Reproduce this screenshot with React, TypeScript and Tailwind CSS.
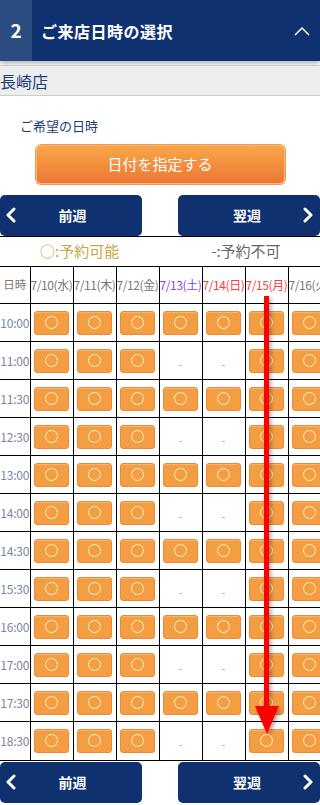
import React from "react";

const days = [
  { label: "7/10(水)", color: "text-[#777777]" },
  { label: "7/11(木)", color: "text-[#777777]" },
  { label: "7/12(金)", color: "text-[#777777]" },
  { label: "7/13(土)", color: "text-[#7b4cf2]" },
  { label: "7/14(日)", color: "text-[#ff3b3b]" },
  { label: "7/15(月)", color: "text-[#ff3b3b]" },
  { label: "7/16(火)", color: "text-[#777777]" },
];

const full = [true, true, true, true, true, true, true];
const partial = [true, true, true, false, false, true, true];

const rows: { time: string; slots: boolean[] }[] = [
  { time: "10:00", slots: full },
  { time: "11:00", slots: partial },
  { time: "11:30", slots: full },
  { time: "12:30", slots: partial },
  { time: "13:00", slots: full },
  { time: "14:00", slots: partial },
  { time: "14:30", slots: full },
  { time: "15:30", slots: partial },
  { time: "16:00", slots: full },
  { time: "17:00", slots: partial },
  { time: "17:30", slots: full },
  { time: "18:30", slots: partial },
];

function Chevron({ dir }: { dir: "left" | "right" }) {
  return (
    <svg width="12" height="16" viewBox="0 0 12 16" className="shrink-0">
      <polyline
        points={dir === "left" ? "9,2 3,8 9,14" : "3,2 9,8 3,14"}
        fill="none"
        stroke="white"
        strokeWidth="3"
        strokeLinecap="round"
        strokeLinejoin="round"
      />
    </svg>
  );
}

function WeekNav() {
  return (
    <div className="flex justify-between">
      <button className="flex h-[41px] w-[142px] items-center rounded-[5px] bg-[#0f3170] pl-[5px] text-[14px] font-bold text-white">
        <Chevron dir="left" />
        <span className="flex-1 pr-[14px] text-center">前週</span>
      </button>
      <button className="flex h-[41px] w-[142px] items-center rounded-[5px] bg-[#0f3170] pr-[6px] text-[14px] font-bold text-white">
        <span className="flex-1 pl-[14px] text-center">翌週</span>
        <Chevron dir="right" />
      </button>
    </div>
  );
}

function Slot() {
  return (
    <div className="mx-auto flex h-[24px] w-[35px] items-center justify-center rounded-[3px] border border-[#ef8a3c] bg-[#f49e43] shadow-[inset_0_1px_0_#f8b56f]">
      <span className="block h-[13px] w-[13px] rounded-full border-[1.5px] border-[#fff3c4]" />
    </div>
  );
}

export default function App() {
  return (
    <div
      className="relative w-[320px] overflow-hidden bg-white"
      style={{ fontFamily: '"Noto Sans CJK JP", "Noto Sans", sans-serif' }}
    >
      <header className="flex h-[61px] items-center bg-[#0f3170] shadow-[0_3px_4px_rgba(0,0,0,0.25)]">
        <div className="flex h-full w-[32px] items-center justify-center bg-[#2b4c80] text-[19px] font-bold text-white">
          2
        </div>
        <h2 className="ml-[9px] flex-1 text-[16px] font-bold tracking-[0.5px] text-white">ご来店日時の選択</h2>
        <svg width="18" height="12" viewBox="0 0 18 12" className="mr-[9px]">
          <polyline points="2,10 9,3 16,10" fill="none" stroke="white" strokeWidth="1.5" />
        </svg>
      </header>

      <div className="mt-[4px] flex h-[31px] items-center border-y border-[#cccccc] bg-[#ededed] text-[16px] text-[#1f3c7a]">
        長崎店
      </div>

      <p className="mt-[20px] pl-[20px] text-[13px] text-[#1f3c7a]">ご希望の日時</p>

      <div className="mt-[9px] flex justify-center">
        <button className="h-[39px] w-[249px] rounded-[5px] border border-[#f9b77a] bg-gradient-to-b from-[#f8a649] to-[#ec7734] text-[15px] text-white shadow-[0_0_0_1px_#f09a50]">
          日付を指定する
        </button>
      </div>

      <div className="mt-[11px]">
        <WeekNav />
      </div>

      <div className="flex h-[31px] items-center border-y border-black text-[15px]">
        <span className="ml-[40px] text-[#c9a646]">○:予約可能</span>
        <span className="ml-[92px] text-[#666666]">-:予約不可</span>
      </div>

      <div className="w-[320px] overflow-hidden">
        <table className="w-[331px] table-fixed border-collapse">
          <colgroup>
            <col className="w-[30px]" />
            {days.map((d) => (
              <col key={d.label} className="w-[43px]" />
            ))}
          </colgroup>
          <thead>
            <tr className="h-[37px]">
              <th className="border-r border-black text-[11.5px] font-normal text-[#777777]">日時</th>
              {days.map((d) => (
                <th
                  key={d.label}
                  className={`overflow-hidden whitespace-nowrap border-r border-black text-[12px] font-normal tracking-[-0.4px] ${d.color}`}
                >
                  {d.label}
                </th>
              ))}
            </tr>
          </thead>
          <tbody>
            {rows.map((r) => (
              <tr key={r.time} className="h-[38px] border-t border-black">
                <td className="border-r border-black text-center text-[12px] tracking-[-0.2px] text-[#7a84a0]">{r.time}</td>
                {r.slots.map((ok, i) => (
                  <td key={i} className="border-r border-black text-center">
                    {ok ? <Slot /> : <span className="text-[10px] text-[#8a94a8]">-</span>}
                  </td>
                ))}
              </tr>
            ))}
          </tbody>
        </table>
      </div>

      <div className="border-t border-black pt-[1px]">
        <WeekNav />
      </div>

      <svg
        className="pointer-events-none absolute left-[250px] top-[296px]"
        width="36"
        height="442"
        viewBox="0 0 36 442"
      >
        <defs>
          <filter id="sh" x="-50%" y="-10%" width="200%" height="120%">
            <feDropShadow dx="2" dy="2" stdDeviation="2" floodColor="#000" floodOpacity="0.35" />
          </filter>
        </defs>
        <g filter="url(#sh)">
          <rect x="14" y="0" width="5" height="414" fill="#ff0000" />
          <polygon points="5,410 29,410 17,438" fill="#ff0000" />
        </g>
      </svg>
    </div>
  );
}
